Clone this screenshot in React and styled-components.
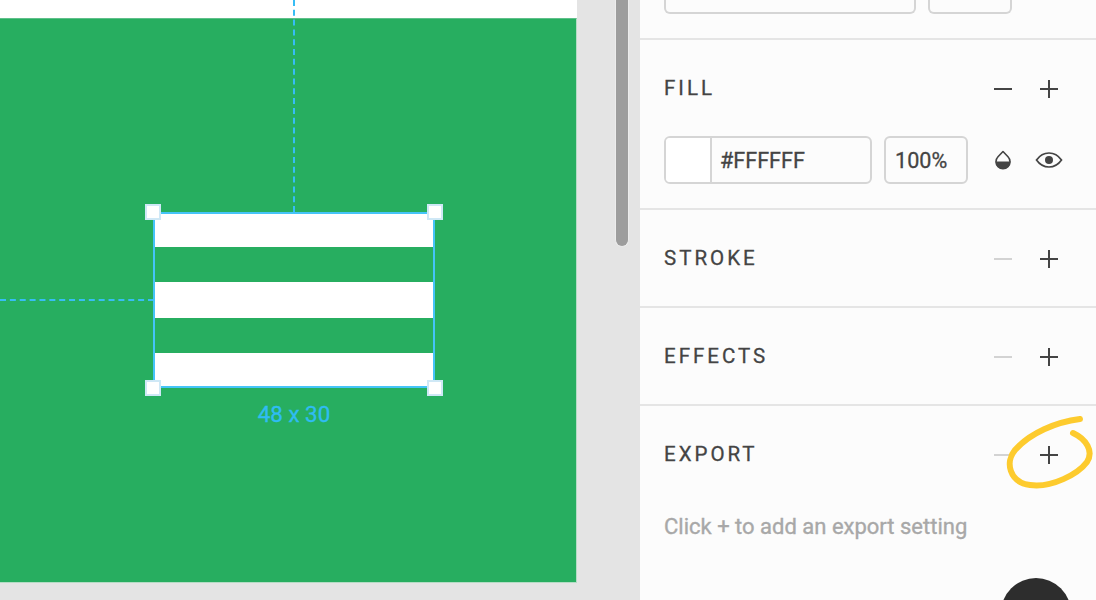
import React from "react";
import styled, { createGlobalStyle } from "styled-components";

const Global = createGlobalStyle`
  html, body { margin: 0; padding: 0; width: 1096px; height: 600px; overflow: hidden; background: #e4e4e4; }
  #root { width: 1096px; height: 600px; }
  * { box-sizing: border-box; }
`;

const Page = styled.div`
  display: grid;
  grid-template-columns: 640px 456px;
  height: 600px;
  font-family: Roboto, "Liberation Sans", sans-serif;
  overflow: hidden;
`;

const Canvas = styled.main`
  position: relative;
  background: #e4e4e4;
  height: 600px;
  overflow: hidden;
`;

const Artboard = styled.div`
  width: 577px;
  height: 583px;
  background: #fff;
  padding-top: 18px;
`;

const ArtboardFill = styled.div`
  height: 565px;
  background: #27ae60;
  border-right: 1px solid #b5dcc5;
  border-bottom: 1px solid #b5dcc5;
  border-top: 1px solid #5fc08a;
`;

const Guide = styled.div`
  position: absolute;
  ${(p) =>
    p.$vertical
      ? `left: 293px; top: 0; width: 0; height: 212px; border-left: 2px dashed #37bdf5;`
      : `left: 0; top: 299px; width: 154px; height: 0; border-top: 2px dashed #37bdf5;`}
`;

const Selection = styled.div`
  position: absolute;
  left: 153px;
  top: 212px;
  width: 282px;
  height: 176px;
  border: 2px solid #45c4f8;
  display: flex;
  flex-direction: column;
  justify-content: space-between;
`;

const Bar = styled.div`
  height: ${(p) => p.$height}px;
  background: #fff;
`;

const Handle = styled.span`
  position: absolute;
  width: 16px;
  height: 16px;
  background: #fff;
  border: 2px solid #cfe8f6;
  ${(p) => (p.$top ? "top: -10px;" : "bottom: -10px;")}
  ${(p) => (p.$left ? "left: -10px;" : "right: -10px;")}
`;

const SizeLabel = styled.div`
  position: absolute;
  left: 153px;
  width: 282px;
  top: 402px;
  text-align: center;
  font-size: 22.4px;
  line-height: 25px;
  color: #2fbcf3;
  -webkit-text-stroke: 0.3px #2fbcf3;
`;

const ScrollThumb = styled.div`
  position: absolute;
  left: 615px;
  top: -10px;
  width: 14px;
  height: 257px;
  border-radius: 0 0 7px 7px;
  background: #9d9d9d;
  border: 1px solid #ececec;
  border-top: 0;
`;

const Panel = styled.aside`
  background: #fcfcfc;
  height: 600px;
  overflow: hidden;
  display: flex;
  flex-direction: column;
  position: relative;
`;

const Section = styled.section`
  height: ${(p) => p.$height}px;
  flex: none;
  border-bottom: ${(p) => (p.$last ? "0" : "2px solid #e5e5e5")};
  padding: 0 24px;
`;

const TopSection = styled(Section)`
  display: flex;
  gap: 12px;
  align-items: flex-start;
`;

const CutField = styled.div`
  height: 14px;
  width: ${(p) => p.$width}px;
  border: 2px solid #d5d5d5;
  border-top: 0;
  border-radius: 0 0 6px 6px;
  background: #fcfcfc;
`;

const Header = styled.div`
  height: 98px;
  display: flex;
  align-items: center;
  justify-content: space-between;
`;

const Title = styled.h2`
  margin: 0;
  font-size: 20.5px;
  font-weight: 400;
  letter-spacing: 3px;
  color: #444;
  -webkit-text-stroke: 0.3px #444;
  position: relative;
  top: -1px;
`;

const Actions = styled.div`
  display: flex;
  gap: 22px;
  align-items: center;
  margin-right: 11px;
`;

const ActionIcon = styled.svg`
  width: 24px;
  height: 24px;
  display: block;
  stroke: ${(p) => (p.$muted ? "#d3d3d3" : "#444")};
  stroke-width: 2;
  fill: none;
`;

const FillRow = styled.div`
  display: flex;
  align-items: center;
  margin-top: -2px;
`;

const HexField = styled.div`
  width: 208px;
  height: 48px;
  border: 2px solid #d5d5d5;
  border-radius: 6px;
  display: flex;
  align-items: stretch;
`;

const Swatch = styled.div`
  width: 46px;
  background: #fff;
  border-right: 2px solid #d5d5d5;
  border-radius: 4px 0 0 4px;
`;

const FieldText = styled.span`
  font-size: 21.6px;
  line-height: 45px;
  color: #444;
  -webkit-text-stroke: 0.3px #444;
  padding-left: ${(p) => p.$pad}px;
`;

const PercentField = styled.div`
  width: 84px;
  height: 48px;
  margin-left: 12px;
  border: 2px solid #d5d5d5;
  border-radius: 6px;
`;

const RowIcons = styled.div`
  display: flex;
  align-items: center;
  margin-left: 26px;
  gap: 23px;
`;

const Hint = styled.p`
  margin: 0;
  margin-top: 10px;
  font-size: 22px;
  line-height: 26px;
  color: #a8a8a8;
  -webkit-text-stroke: 0.35px #a8a8a8;
`;

const Scribble = styled.svg`
  position: absolute;
  left: 366px;
  top: 416px;
  width: 90px;
  height: 74px;
  fill: none;
  stroke: #fdcb2e;
  stroke-width: 6;
  stroke-linecap: round;
  stroke-linejoin: round;
`;

const Fab = styled.div`
  position: absolute;
  left: 361px;
  top: 578px;
  width: 70px;
  height: 70px;
  border-radius: 50%;
  background: #2d2d2d;
`;

const Minus = ({ muted }) => (
  <ActionIcon viewBox="0 0 24 24" $muted={muted}>
    <path d="M3 12h18" />
  </ActionIcon>
);
const Plus = () => (
  <ActionIcon viewBox="0 0 24 24">
    <path d="M3 12h18M12 3v18" />
  </ActionIcon>
);

const Row = ({ title, muted, height, last, children }) => (
  <Section $height={height} $last={last}>
    <Header>
      <Title>{title}</Title>
      <Actions>
        <Minus muted={muted} />
        <Plus />
      </Actions>
    </Header>
    {children}
  </Section>
);

export default function App() {
  return (
    <Page>
      <Global />
      <Canvas>
        <Artboard>
          <ArtboardFill />
        </Artboard>
        <Guide $vertical />
        <Guide />
        <Selection>
          <Bar $height={33} />
          <Bar $height={35.5} />
          <Bar $height={33} />
          <Handle $top $left />
          <Handle $top />
          <Handle $left />
          <Handle />
        </Selection>
        <SizeLabel>48 x 30</SizeLabel>
        <ScrollThumb />
      </Canvas>
      <Panel>
        <TopSection $height={40}>
          <CutField $width={252} />
          <CutField $width={84} />
        </TopSection>
        <Row title="FILL" height={170}>
          <FillRow>
            <HexField>
              <Swatch />
              <FieldText $pad={8}>#FFFFFF</FieldText>
            </HexField>
            <PercentField>
              <FieldText $pad={9}>100%</FieldText>
            </PercentField>
            <RowIcons>
              <svg width="18" height="20" viewBox="0 0 18 20">
                <path d="M9 1.500 L14 6.800 A7 7 0 1 1 4 6.800 Z" fill="none" stroke="#444" strokeWidth="1.600" strokeLinejoin="round" />
                <path d="M1.500 11.500h15a7.500 7.500 0 0 1-15 0z" fill="#444" />
              </svg>
              <svg width="28" height="18" viewBox="0 0 28 18">
                <path d="M1.500 9C5 4 9 2 14 2s9 2 12.500 7C23 14 19 16 14 16S5 14 1.500 9z" fill="none" stroke="#444" strokeWidth="1.700" />
                <circle cx="14" cy="9" r="4" fill="#444" />
              </svg>
            </RowIcons>
          </FillRow>
        </Row>
        <Row title="STROKE" muted height={98} />
        <Row title="EFFECTS" muted height={98} />
        <Row title="EXPORT" muted height={195} last>
          <Hint>Click + to add an export setting</Hint>
        </Row>
        <Scribble viewBox="0 0 90 74">
          <path d="M74 3C50 6 24 17 9 34C-1 46 3 66 24 69C46 72 72 58 81 46C88 35 80 23 67 17" />
        </Scribble>
        <Fab />
      </Panel>
    </Page>
  );
}
